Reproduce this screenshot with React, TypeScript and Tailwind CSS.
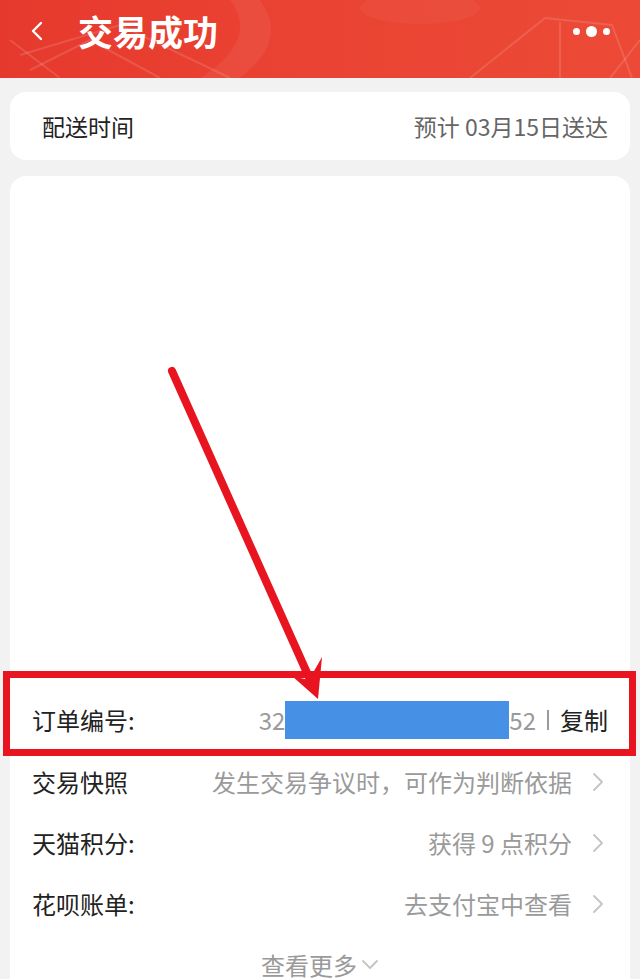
import React from "react";

const Chevron = () => (
  <svg width="12" height="22" viewBox="0 0 12 22" className="ml-[20px] shrink-0">
    <path d="M2 3 L10 11 L2 19" fill="none" stroke="#c4c4c4" strokeWidth="1.8" strokeLinecap="round" strokeLinejoin="round" />
  </svg>
);

const Row = ({ label, value, arrow = true }: { label: string; value: string; arrow?: boolean }) => (
  <div className="h-[61px] flex items-center justify-between pl-[22px] pr-[26px]">
    <span className="text-[24px] text-[#222]">{label}</span>
    <div className="flex items-center">
      <span className="text-[24px] text-[#9a9a9a]">{value}</span>
      {arrow && <Chevron />}
    </div>
  </div>
);

export default function App() {
  return (
    <div
      className="relative w-[640px] h-[979px] overflow-hidden bg-[#f2f2f2] flex flex-col"
      style={{ fontFamily: '"Noto Sans CJK SC", "Noto Sans", sans-serif' }}
    >
      {/* Header */}
      <div className="relative h-[78px] shrink-0 bg-gradient-to-r from-[#e6392d] via-[#ea4333] to-[#ec4a37] overflow-hidden flex items-center">
        <svg className="absolute inset-0" width="640" height="78" viewBox="0 0 640 78">
          <g fill="none" stroke="rgba(255,255,255,0.13)" strokeWidth="2">
            <path d="M20 55 L120 25 L230 78" />
            <path d="M30 70 L90 40 L160 78" />
            <path d="M10 40 L60 78" />
            <path d="M545 18 L612 25 L632 78" />
            <path d="M470 78 L545 18" />
            <path d="M560 78 L560 22" />
            <path d="M610 78 L640 40" />
          </g>
          <path d="M230 0 Q260 40 200 78 L240 78 Q290 40 260 0 Z" fill="rgba(255,255,255,0.06)" />
          <ellipse cx="420" cy="8" rx="60" ry="16" fill="rgba(255,255,255,0.04)" />
        </svg>
        <svg className="relative ml-[30px] -mt-[16px]" width="14" height="20" viewBox="0 0 14 20">
          <path d="M11 2 L3 10 L11 18" fill="none" stroke="#fff" strokeWidth="2.4" strokeLinecap="round" strokeLinejoin="round" />
        </svg>
        <span className="relative ml-[34px] text-[35px] font-bold text-white leading-none -mt-[18px]">交易成功</span>
        <div className="relative ml-auto mr-[30px] -mt-[16px] flex items-center gap-[6px]">
          <span className="w-[7px] h-[7px] rounded-full bg-white" />
          <span className="w-[11px] h-[11px] rounded-full bg-white" />
          <span className="w-[7px] h-[7px] rounded-full bg-white" />
        </div>
      </div>

      {/* Delivery card */}
      <div className="mx-[10px] mt-[14px] h-[68px] shrink-0 rounded-[16px] bg-white flex items-center justify-between pl-[32px] pr-[22px]">
        <span className="text-[23px] text-[#222]">配送时间</span>
        <span className="text-[23px] text-[#666]">预计 03月15日送达</span>
      </div>

      {/* Detail card */}
      <div className="mx-[10px] mt-[16px] flex-1 rounded-t-[16px] bg-white flex flex-col">
        <div className="h-[513px] shrink-0" />
        <div className="h-[62px] flex items-center justify-between pl-[22px] pr-[22px]">
          <span className="text-[24px] text-[#222]">订单编号:</span>
          <div className="flex items-center">
            <span className="text-[24px] text-[#9a9a9a]">32</span>
            <span className="w-[224px] h-[38px] bg-[#4690e6]" />
            <span className="text-[24px] text-[#9a9a9a]">52</span>
            <span className="mx-[11px] w-[2px] h-[20px] bg-[#9a9a9a]" />
            <span className="text-[24px] text-[#222]">复制</span>
          </div>
        </div>
        <Row label="交易快照" value="发生交易争议时，可作为判断依据" />
        <Row label="天猫积分:" value="获得 9 点积分" />
        <Row label="花呗账单:" value="去支付宝中查看" />
        <div className="h-[61px] flex items-center justify-center">
          <span className="text-[24px] text-[#9a9a9a]">查看更多</span>
          <svg width="18" height="12" viewBox="0 0 18 12" className="ml-[4px]">
            <path d="M2 2 L9 9 L16 2" fill="none" stroke="#c4c4c4" strokeWidth="1.8" strokeLinecap="round" strokeLinejoin="round" />
          </svg>
        </div>
      </div>

      {/* Annotation overlay */}
      <svg className="absolute inset-0 pointer-events-none" width="640" height="979" viewBox="0 0 640 979">
        <rect x="6.5" y="674.5" width="626" height="78" fill="none" stroke="#e8141f" strokeWidth="7" />
        <path d="M172 371 L312 684" stroke="#e8141f" strokeWidth="8" strokeLinecap="round" fill="none" />
        <path d="M318 699 L292 676 L309 680 L322 657 Z" fill="#e8141f" />
      </svg>
    </div>
  );
}
